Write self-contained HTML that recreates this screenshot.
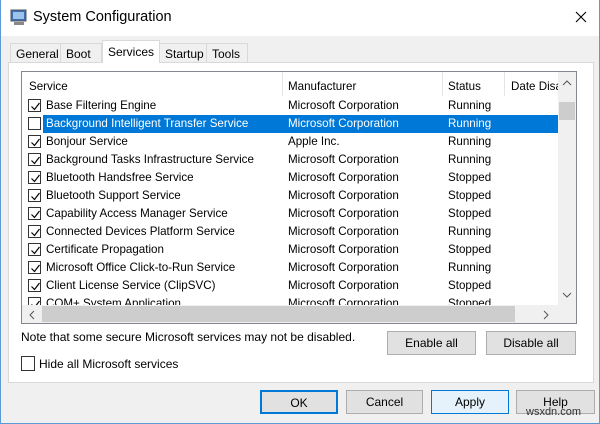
<!DOCTYPE html>
<html><head><style>
*{margin:0;padding:0;box-sizing:border-box}
body{width:600px;height:424px;overflow:hidden;font-family:"Liberation Sans",sans-serif;font-size:12px;color:#000;background:#f0f0f0;position:relative}
.win{position:absolute;left:0;top:0;width:600px;height:424px;border:1px solid #5a9bd5;border-top:none;background:#f0f0f0}
.title{position:absolute;left:0;top:0;width:598px;height:36px;background:#fff}
.title span{position:absolute;left:32px;top:9px;font-size:14.5px}
.abs{position:absolute}
.tab{position:absolute;top:43px;height:20px;border:1px solid #d9d9d9;background:#f0f0f0;font-size:12px;padding:3px 0 0 5px}
.panel{position:absolute;left:7px;top:62px;width:586px;height:321px;background:#fff;border:1px solid #d9d9d9}
.list{position:absolute;left:20px;top:71px;width:556px;height:253px;border:1px solid #828790;background:#fff;overflow:hidden;font-size:11.6px}
.row{position:absolute;left:0;height:18px;width:536px}
.row span{position:absolute;top:2px;white-space:nowrap}
.cb{position:absolute;left:6px;top:2px;width:13px;height:13px;border:1px solid #333;background:#fff}
.cb svg{position:absolute;left:1px;top:1px}
.btn{position:absolute;height:24px;border:1px solid #adadad;background:#e1e1e1;text-align:center;line-height:22px;font-size:12px}
</style></head><body>
<div class="win">
<div class="title">
<svg class="abs" style="left:9px;top:9px" width="18" height="17"><rect x="1" y="1" width="15" height="11" fill="#3d6fb6" stroke="#555"/><rect x="3" y="3" width="11" height="7" fill="#9ec3ea"/><rect x="4" y="13" width="10" height="3" fill="#888"/></svg>
<span>System Configuration</span>
<svg class="abs" style="left:574px;top:11px" width="12" height="12"><path d="M1 1L11 11M11 1L1 11" stroke="#000" stroke-width="1.1"/></svg>
</div>
<div class="panel"></div>
<div class="tab" style="left:9px;width:51px">General</div>
<div class="tab" style="left:59px;width:42px">Boot</div>
<div class="tab" style="left:101px;top:40px;height:23px;width:58px;background:#fff;border-bottom:none;padding-top:4px">Services</div>
<div class="tab" style="left:158px;width:48px">Startup</div>
<div class="tab" style="left:205px;width:42px">Tools</div>
<div class="list">
<div class="abs" style="left:0;top:0;width:536px;height:24px;background:#fff">
<span class="abs" style="left:7px;top:8px">Service</span>
<span class="abs" style="left:266px;top:8px">Manufacturer</span>
<span class="abs" style="left:426px;top:8px">Status</span>
<span class="abs" style="left:489px;top:8px;white-space:nowrap">Date Disa</span>
<div class="abs" style="left:260px;top:0;width:1px;height:24px;background:#e5e5e5"></div>
<div class="abs" style="left:420px;top:0;width:1px;height:24px;background:#e5e5e5"></div>
<div class="abs" style="left:482px;top:0;width:1px;height:24px;background:#e5e5e5"></div>
</div>
<div class="abs" style="left:21px;top:43px;width:515px;height:18px;background:#0078d7"></div>
<div id="rows"></div>
<div class="abs" style="left:536px;top:0;width:18px;height:233px;background:#f0f0f0"></div>
<div class="abs" style="left:537px;top:30px;width:16px;height:18px;background:#cdcdcd"></div>
<svg class="abs" style="left:540px;top:8px" width="10" height="6"><path d="M1 5L5 1L9 5" stroke="#555" fill="none"/></svg>
<svg class="abs" style="left:540px;top:220px" width="10" height="6"><path d="M1 1L5 5L9 1" stroke="#555" fill="none"/></svg>
<div class="abs" style="left:0;top:233px;width:554px;height:18px;background:#f0f0f0"></div>
<div class="abs" style="left:20px;top:234px;width:473px;height:16px;background:#cdcdcd"></div>
<svg class="abs" style="left:7px;top:238px" width="6" height="10"><path d="M5 1L1 5L5 9" stroke="#555" fill="none"/></svg>
<svg class="abs" style="left:521px;top:238px" width="6" height="10"><path d="M1 1L5 5L1 9" stroke="#555" fill="none"/></svg>
</div>
<span class="abs" style="left:20px;top:330px">Note that some secure Microsoft services may not be disabled.</span>
<div class="btn" style="left:386px;top:331px;width:89px">Enable all</div>
<div class="btn" style="left:485px;top:331px;width:90px">Disable all</div>
<div class="abs" style="left:20px;top:356px;width:14px;height:15px;border:1px solid #333;background:#fff"></div>
<span class="abs" style="left:38px;top:357px">Hide all Microsoft services</span>
<div class="btn" style="left:259px;top:390px;width:78px;border:2px solid #0078d7">OK</div>
<div class="btn" style="left:345px;top:390px;width:77px">Cancel</div>
<div class="btn" style="left:430px;top:390px;width:78px;background:#e5f1fb;border-color:#0078d7">Apply</div>
<div class="btn" style="left:515px;top:390px;width:79px">Help</div>
<span class="abs" style="left:525px;top:406px;font-size:11px;color:#333">wsxdn.com</span>
</div>
<script>
var d=[["Base Filtering Engine","Microsoft Corporation","Running",1],
["Background Intelligent Transfer Service","Microsoft Corporation","Running",0],
["Bonjour Service","Apple Inc.","Running",1],
["Background Tasks Infrastructure Service","Microsoft Corporation","Running",1],
["Bluetooth Handsfree Service","Microsoft Corporation","Stopped",1],
["Bluetooth Support Service","Microsoft Corporation","Stopped",1],
["Capability Access Manager Service","Microsoft Corporation","Stopped",1],
["Connected Devices Platform Service","Microsoft Corporation","Running",1],
["Certificate Propagation","Microsoft Corporation","Stopped",1],
["Microsoft Office Click-to-Run Service","Microsoft Corporation","Running",1],
["Client License Service (ClipSVC)","Microsoft Corporation","Stopped",1],
["COM+ System Application","Microsoft Corporation","Stopped",1]];
var h="";d.forEach(function(r,i){var sel=i==1;var c=sel?"#fff":"#000";
h+='<div class="row" style="top:'+(25+i*18)+'px;color:'+c+'"><div class="cb">'+(r[3]?'<svg width="11" height="11"><path d="M1.5 5.5L4.5 8.5L9.5 2" stroke="#000" stroke-width="1.2" fill="none"/></svg>':'')+'</div><span style="left:24px">'+r[0]+'</span><span style="left:266px">'+r[1]+'</span><span style="left:426px">'+r[2]+'</span></div>';});
document.getElementById("rows").innerHTML=h;
</script>
</body></html>
